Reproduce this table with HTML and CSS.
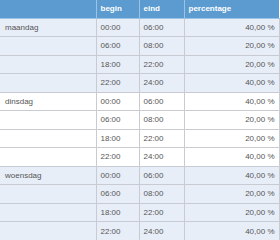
FILE: index.html
```html
<!DOCTYPE html>
<html>
<head>
<meta charset="utf-8">
<link rel="stylesheet" href="styles.css">
</head>
<body>
<table class="grid">
  <colgroup>
    <col class="c-day"><col class="c-begin"><col class="c-end"><col class="c-pct">
  </colgroup>
  <thead>
    <tr><th></th><th>begin</th><th>eind</th><th>percentage</th></tr>
  </thead>
  <tbody class="alt">
    <tr><td>maandag</td><td>00:00</td><td>06:00</td><td class="num">40,00 %</td></tr>
    <tr><td></td><td>06:00</td><td>08:00</td><td class="num">20,00 %</td></tr>
    <tr><td></td><td>18:00</td><td>22:00</td><td class="num">20,00 %</td></tr>
    <tr><td></td><td>22:00</td><td>24:00</td><td class="num">40,00 %</td></tr>
  </tbody>
  <tbody>
    <tr><td>dinsdag</td><td>00:00</td><td>06:00</td><td class="num">40,00 %</td></tr>
    <tr><td></td><td>06:00</td><td>08:00</td><td class="num">20,00 %</td></tr>
    <tr><td></td><td>18:00</td><td>22:00</td><td class="num">20,00 %</td></tr>
    <tr><td></td><td>22:00</td><td>24:00</td><td class="num">40,00 %</td></tr>
  </tbody>
  <tbody class="alt">
    <tr><td>woensdag</td><td>00:00</td><td>06:00</td><td class="num">40,00 %</td></tr>
    <tr><td></td><td>06:00</td><td>08:00</td><td class="num">20,00 %</td></tr>
    <tr><td></td><td>18:00</td><td>22:00</td><td class="num">20,00 %</td></tr>
    <tr><td></td><td>22:00</td><td>24:00</td><td class="num">40,00 %</td></tr>
  </tbody>
</table>
</body>
</html>
```
FILE: styles.css
```css
html, body {
  margin: 0;
  padding: 0;
  background: #ffffff;
}
.grid {
  width: 279px;
  border-collapse: collapse;
  table-layout: fixed;
  font-family: "Liberation Sans", Arial, sans-serif;
  font-size: 8px;
  color: #555555;
}
.c-day { width: 96px; }
.c-begin { width: 43px; }
.c-end { width: 45px; }
.c-pct { width: 95px; }
.grid th {
  background: #5b9bd0;
  color: #ffffff;
  font-weight: bold;
  text-align: left;
  height: 18px;
  padding: 0 0 0 4px;
  border-left: 1px solid #9cc3e4;
  border-bottom: 1px solid #9cc3e4;
  box-sizing: border-box;
}
.grid th:first-child { border-left: none; }
.grid td {
  height: 18.5px;
  padding: 0 0 0 4px;
  border-top: 1px solid #c8ccd2;
  border-left: 1px solid #c8ccd2;
  border-right: 1px solid #c8ccd2;
  box-sizing: border-box;
  background: #ffffff;
}
.grid td:first-child { border-left: none; padding-left: 5px; }
.grid .alt td { background: #e8eef8; }
.grid td.num {
  text-align: right;
  padding: 0 4px 0 0;
}
```
